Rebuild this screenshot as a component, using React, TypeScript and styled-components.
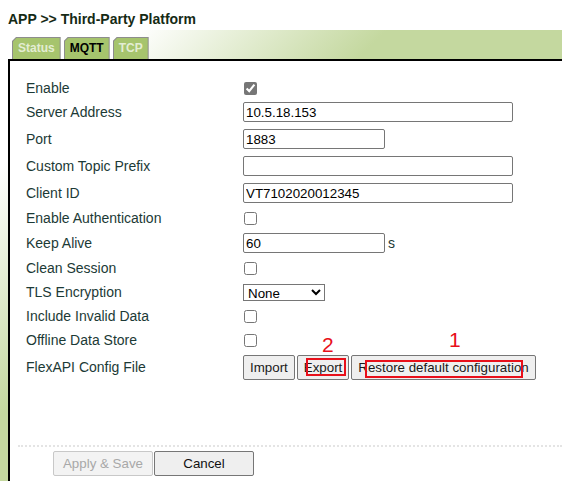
import React from "react";
import styled, { createGlobalStyle } from "styled-components";

const Global = createGlobalStyle`
  html, body { margin: 0; padding: 0; height: 100%; }
  body {
    font-family: "Liberation Sans", Arial, sans-serif;
    background: linear-gradient(135deg, #ffffff 0%, #ffffff 16%, #c4d89f 40%, #c4d89f 100%);
    background-attachment: fixed;
    overflow: hidden;
  }
  #root { height: 100%; }
`;

const Page = styled.div`
  height: 100%;
  display: flex;
  flex-direction: column;
  padding-left: 8px;
  box-sizing: border-box;
`;

const Header = styled.div`
  margin-left: -8px;
  padding: 11px 0 0 8px;
  height: 30px;
  box-sizing: border-box;
  background: #fff;
`;

const Title = styled.div`
  font-size: 14px;
  font-weight: bold;
  line-height: 16px;
  color: #152a15;
`;

const TabBar = styled.div`
  display: flex;
  gap: 3px;
  margin: 7px 0 0 4px;
  height: 22px;
`;

const TabOuter = styled.div`
  background: #8d8d8d;
  padding: 1px 1px 0 1px;
  clip-path: polygon(4px 0, 100% 0, 100% 100%, 0 100%, 0 4px);
  display: flex;
`;

const TabInner = styled.div<{ $active?: boolean }>`
  background: #a6c46d;
  clip-path: polygon(3.5px 0, 100% 0, 100% 100%, 0 100%, 0 3.5px);
  padding: 0 5px;
  font-size: 12px;
  font-weight: bold;
  line-height: 21px;
  color: ${(p) => (p.$active ? "#000" : "#e3edd3")};
`;

const Panel = styled.div`
  flex: 1;
  background: #fff;
  border-left: 2px solid #000;
  border-top: 2px solid #000;
  padding: 15px 0 0 16px;
  display: flex;
  flex-direction: column;
`;

const Row = styled.div<{ $h: number }>`
  display: grid;
  grid-template-columns: 217px 1fr;
  align-items: center;
  height: ${(p) => p.$h}px;
`;

const Label = styled.div`
  font-size: 14px;
  color: #1c3a36;
`;

const Field = styled.div`
  display: flex;
  align-items: center;
  position: relative;
`;

const TextInput = styled.input<{ $w: number }>`
  box-sizing: border-box;
  width: ${(p) => p.$w}px;
  height: 20px;
  border: 1px solid #767676;
  border-radius: 2px;
  padding: 1px 2px;
  margin: 0;
  font-family: "Liberation Sans", Arial, sans-serif;
  font-size: 13.333px;
  color: #000;
  background: #fff;
  outline: none;
`;

const Unit = styled.span`
  font-size: 14px;
  color: #1c3a36;
  margin-left: 3px;
`;

const Check = styled.input`
  width: 13px;
  height: 13px;
  margin: 0 0 0 1px;
  accent-color: #767676;
`;

const Select = styled.select`
  box-sizing: border-box;
  width: 82px;
  height: 17px;
  margin: 0;
  font-family: "Liberation Sans", Arial, sans-serif;
  font-size: 13.333px;
  color: #000;
  border: 1px solid #767676;
  border-radius: 0;
  background: #fff;
  padding: 0;
`;

const Btn = styled.button`
  box-sizing: border-box;
  height: 25px;
  padding: 0 6px;
  margin: 0;
  font-family: "Liberation Sans", Arial, sans-serif;
  font-size: 13.333px;
  color: #1a1a1a;
  background: #efefef;
  border: 1px solid #767676;
  border-radius: 2px;
`;

const BtnGroup = styled.div`
  display: flex;
  gap: 2px;
  position: relative;
`;

const RedBox = styled.div<{ $l: number; $t: number; $w: number; $h: number }>`
  position: absolute;
  left: ${(p) => p.$l}px;
  top: ${(p) => p.$t}px;
  width: ${(p) => p.$w}px;
  height: ${(p) => p.$h}px;
  box-sizing: border-box;
  border: 2px solid #e8101a;
  pointer-events: none;
`;

const RedNum = styled.div<{ $l: number; $t: number }>`
  position: absolute;
  left: ${(p) => p.$l}px;
  top: ${(p) => p.$t}px;
  font-family: "Liberation Sans", Arial, sans-serif;
  font-size: 21px;
  line-height: 20px;
  color: #e8101a;
`;

const Footer = styled.div`
  margin: 65px 0 0 -8px;
  border-top: 2px dotted #e4e4e4;
  padding: 4px 0 0 35px;
  display: flex;
`;

const FootBtn = styled.button<{ $disabled?: boolean }>`
  box-sizing: border-box;
  width: 100px;
  height: 25px;
  margin: 0 1px 0 0;
  font-family: "Liberation Sans", Arial, sans-serif;
  font-size: 13.333px;
  color: ${(p) => (p.$disabled ? "#a8a8a8" : "#111")};
  background: ${(p) => (p.$disabled ? "#f3f3f3" : "#efefef")};
  border: 1px solid ${(p) => (p.$disabled ? "#c8c8c8" : "#767676")};
  border-radius: 2px;
`;

export default function App() {
  return (
    <>
      <Global />
      <Page>
        <Header>
          <Title>APP &gt;&gt; Third-Party Platform</Title>
        </Header>
        <TabBar>
          <TabOuter>
            <TabInner>Status</TabInner>
          </TabOuter>
          <TabOuter>
            <TabInner $active>MQTT</TabInner>
          </TabOuter>
          <TabOuter>
            <TabInner>TCP</TabInner>
          </TabOuter>
        </TabBar>
        <Panel>
          <Row $h={24}>
            <Label>Enable</Label>
            <Field>
              <Check type="checkbox" defaultChecked />
            </Field>
          </Row>
          <Row $h={24}>
            <Label>Server Address</Label>
            <Field>
              <TextInput $w={270} defaultValue="10.5.18.153" />
            </Field>
          </Row>
          <Row $h={30}>
            <Label>Port</Label>
            <Field>
              <TextInput $w={142} defaultValue="1883" />
            </Field>
          </Row>
          <Row $h={24}>
            <Label>Custom Topic Prefix</Label>
            <Field>
              <TextInput $w={270} defaultValue="" />
            </Field>
          </Row>
          <Row $h={30}>
            <Label>Client ID</Label>
            <Field>
              <TextInput $w={270} defaultValue="VT7102020012345" />
            </Field>
          </Row>
          <Row $h={20}>
            <Label>Enable Authentication</Label>
            <Field>
              <Check type="checkbox" />
            </Field>
          </Row>
          <Row $h={30}>
            <Label>Keep Alive</Label>
            <Field>
              <TextInput $w={142} defaultValue="60" />
              <Unit>s</Unit>
            </Field>
          </Row>
          <Row $h={20}>
            <Label>Clean Session</Label>
            <Field>
              <Check type="checkbox" />
            </Field>
          </Row>
          <Row $h={28}>
            <Label>TLS Encryption</Label>
            <Field>
              <Select defaultValue="None">
                <option>None</option>
                <option>TLS</option>
              </Select>
            </Field>
          </Row>
          <Row $h={20}>
            <Label>Include Invalid Data</Label>
            <Field>
              <Check type="checkbox" />
            </Field>
          </Row>
          <Row $h={28}>
            <Label>Offline Data Store</Label>
            <Field>
              <Check type="checkbox" />
            </Field>
          </Row>
          <Row $h={26}>
            <Label>FlexAPI Config File</Label>
            <Field>
              <BtnGroup>
                <Btn>Import</Btn>
                <Btn>Export</Btn>
                <Btn>Restore default configuration</Btn>
                <RedBox $l={63} $t={3} $w={40} $h={18} />
                <RedBox $l={122} $t={5} $w={158} $h={18} />
                <RedNum $l={79} $t={-20}>2</RedNum>
                <RedNum $l={206} $t={-25}>1</RedNum>
              </BtnGroup>
            </Field>
          </Row>
          <Footer>
            <FootBtn $disabled disabled>
              Apply &amp; Save
            </FootBtn>
            <FootBtn>Cancel</FootBtn>
          </Footer>
        </Panel>
      </Page>
    </>
  );
}
